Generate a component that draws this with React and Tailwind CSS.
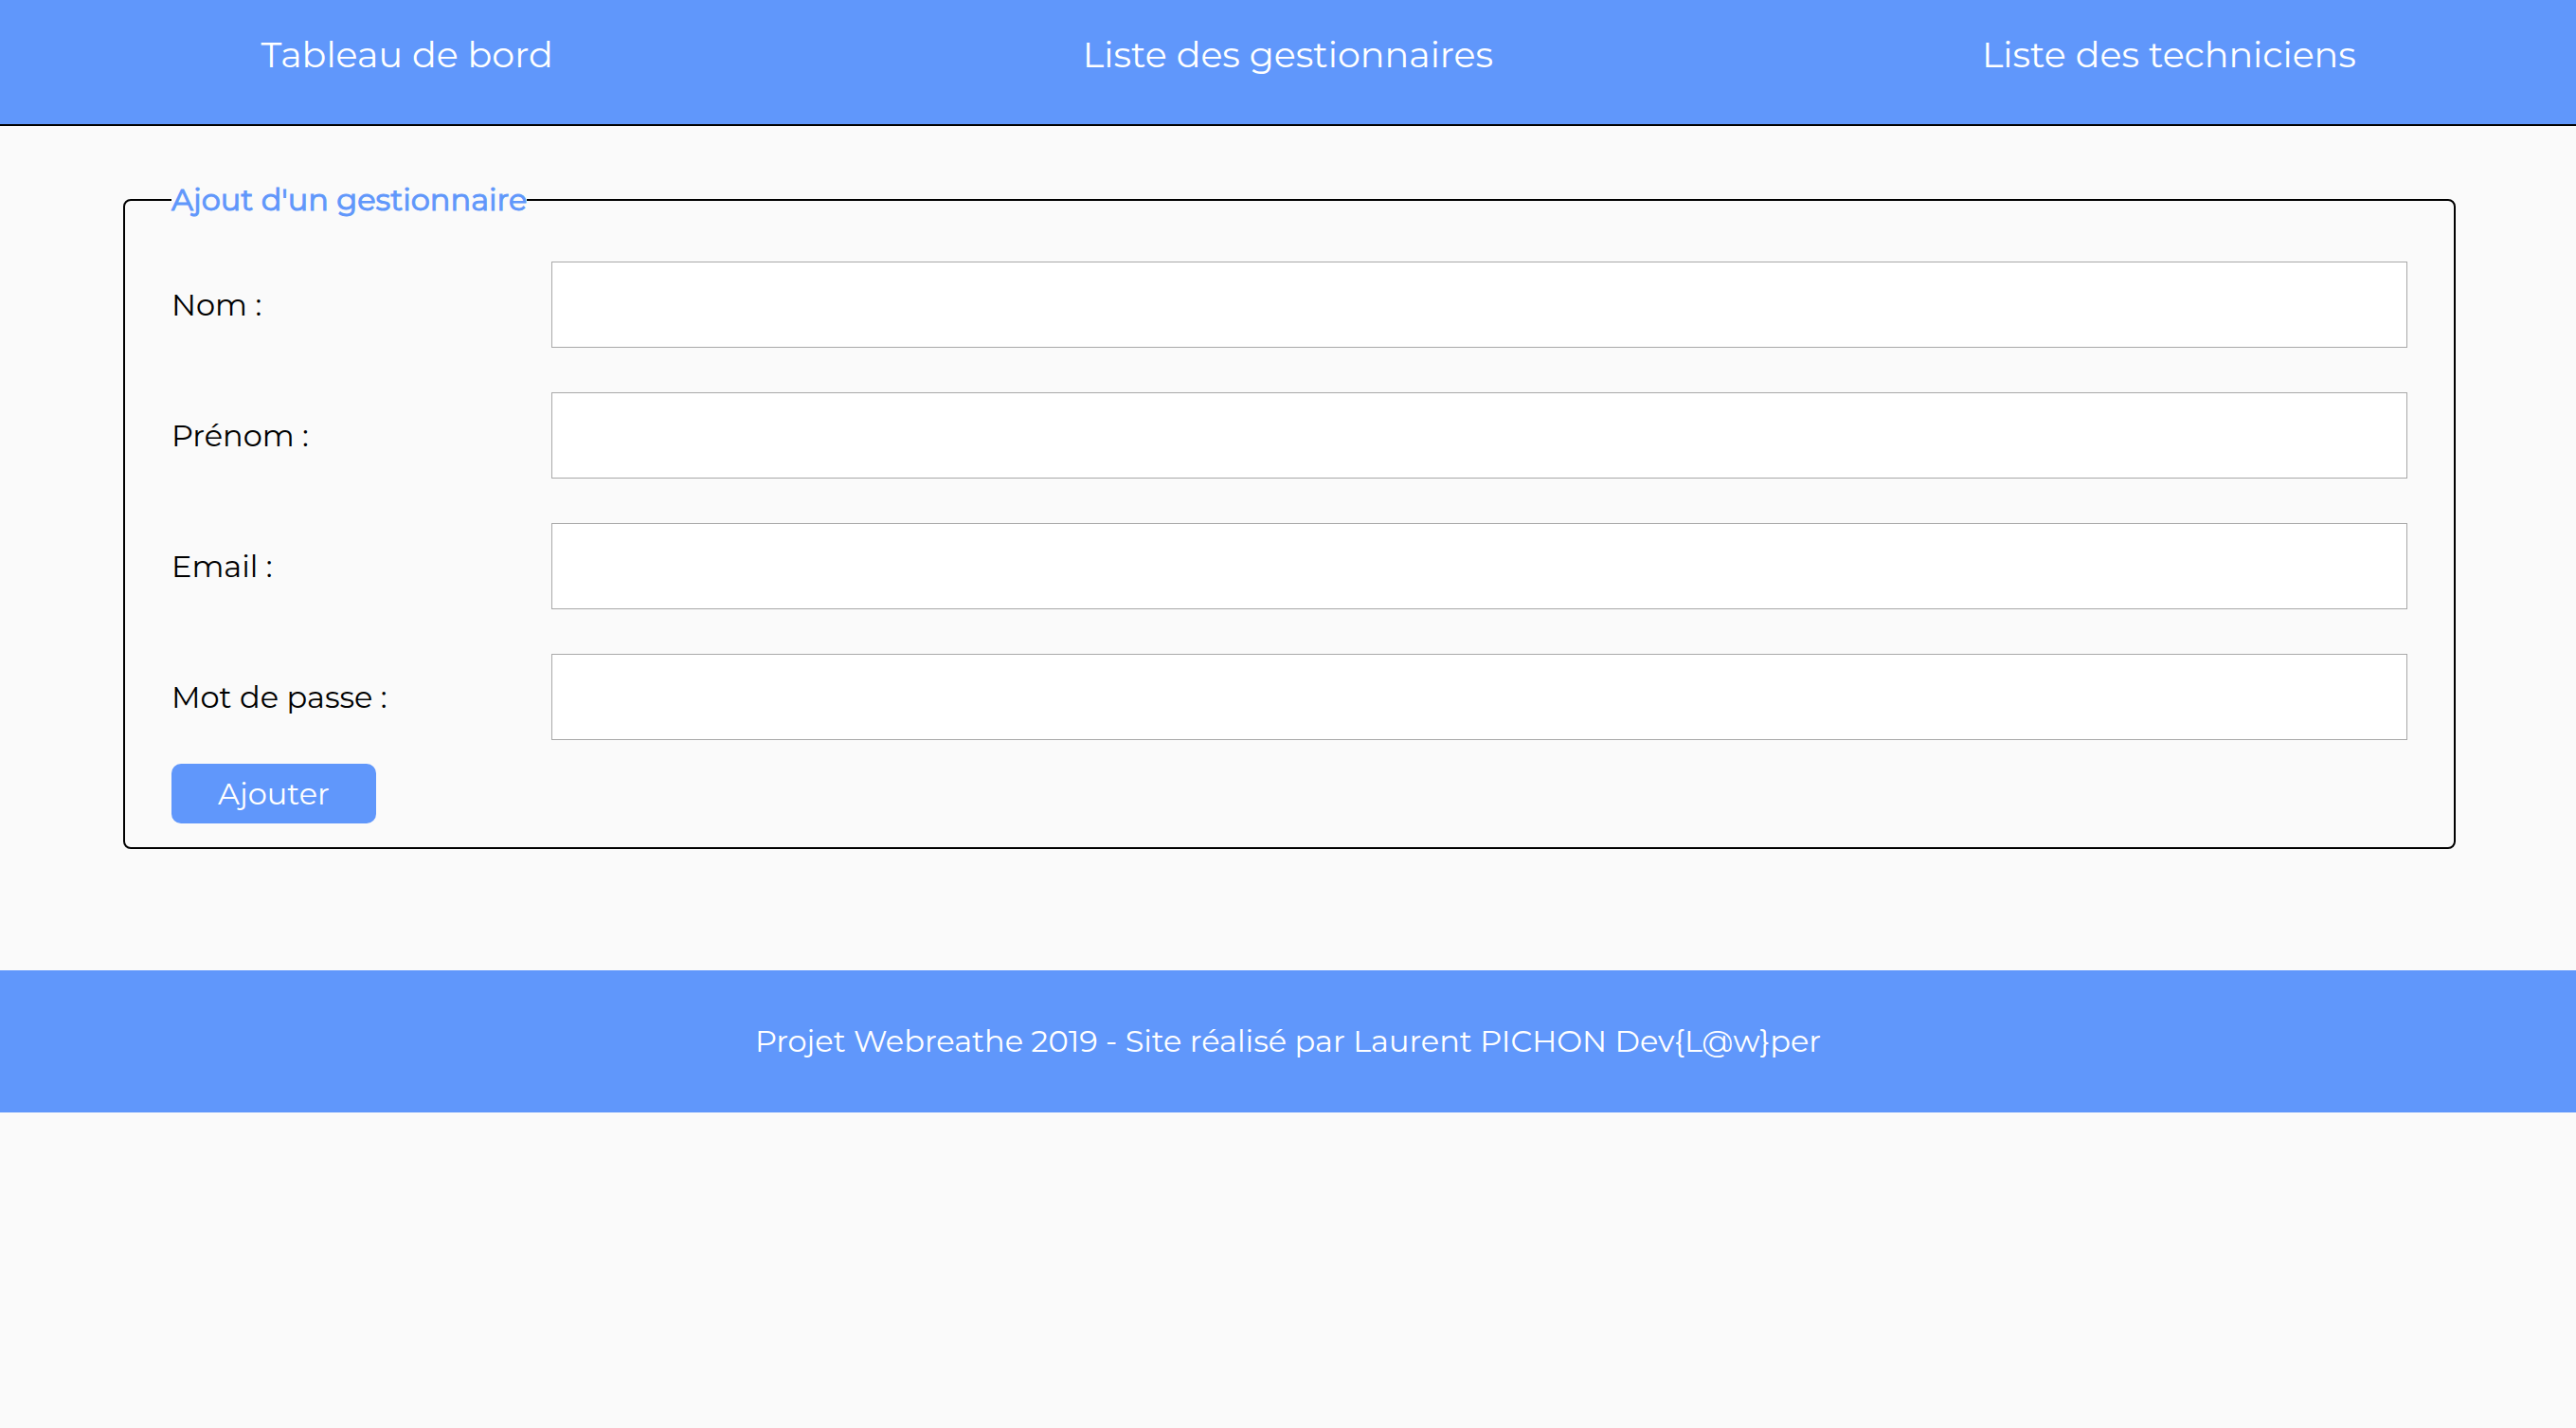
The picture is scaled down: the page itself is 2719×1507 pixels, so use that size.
const links = ["Tableau de bord", "Liste des gestionnaires", "Liste des techniciens"];

const fields = [
  { id: "nom", label: "Nom :", type: "text" },
  { id: "prenom", label: "Prénom :", type: "text" },
  { id: "email", label: "Email :", type: "email" },
  { id: "password", label: "Mot de passe :", type: "password" },
];

export default function App() {
  return (
    <div className="min-h-screen bg-[#fafafa] font-['Montserrat','Inter',sans-serif] text-[32px] leading-10 text-black">
      <header className="border-b-2 border-black bg-[#6097fb]">
        <nav className="px-[5%] pt-[34px] pb-[49px]">
          <ul className="flex justify-between text-[38px] leading-[48px] text-white">
            {links.map((text) => (
              <li key={text} className="flex w-[24%] justify-center whitespace-nowrap">
                <a href="#">{text}</a>
              </li>
            ))}
          </ul>
        </nav>
      </header>

      <main className="pt-[58px] pr-[127px] pb-32 pl-[130px]">
        <form>
          <fieldset className="rounded-lg border-2 border-black px-[49px] pb-[25px]">
            <legend className="text-[#6097fb] [-webkit-text-stroke:1px_#6097fb]">Ajout d'un gestionnaire</legend>
            <div className="flex flex-col gap-[47px] pt-[45px]">
              {fields.map(({ id, label, type }) => (
                <div key={id} className="flex items-center">
                  <label htmlFor={id} className="w-[401px] shrink-0">
                    {label}
                  </label>
                  <input
                    id={id}
                    name={id}
                    type={type}
                    className="h-[91px] min-w-0 flex-1 border border-[#a9a9a9] bg-white px-4"
                  />
                </div>
              ))}
            </div>
            <button
              type="submit"
              className="mt-[25px] block h-[63px] w-[216px] rounded-[10px] bg-[#6097fb] text-white"
            >
              Ajouter
            </button>
          </fieldset>
        </form>
      </main>

      <footer className="bg-[#6097fb] px-8 py-[55px] text-center text-white">
        <p>Projet Webreathe 2019 - Site réalisé par Laurent PICHON Dev{"{L@w}"}per</p>
      </footer>
    </div>
  );
}
